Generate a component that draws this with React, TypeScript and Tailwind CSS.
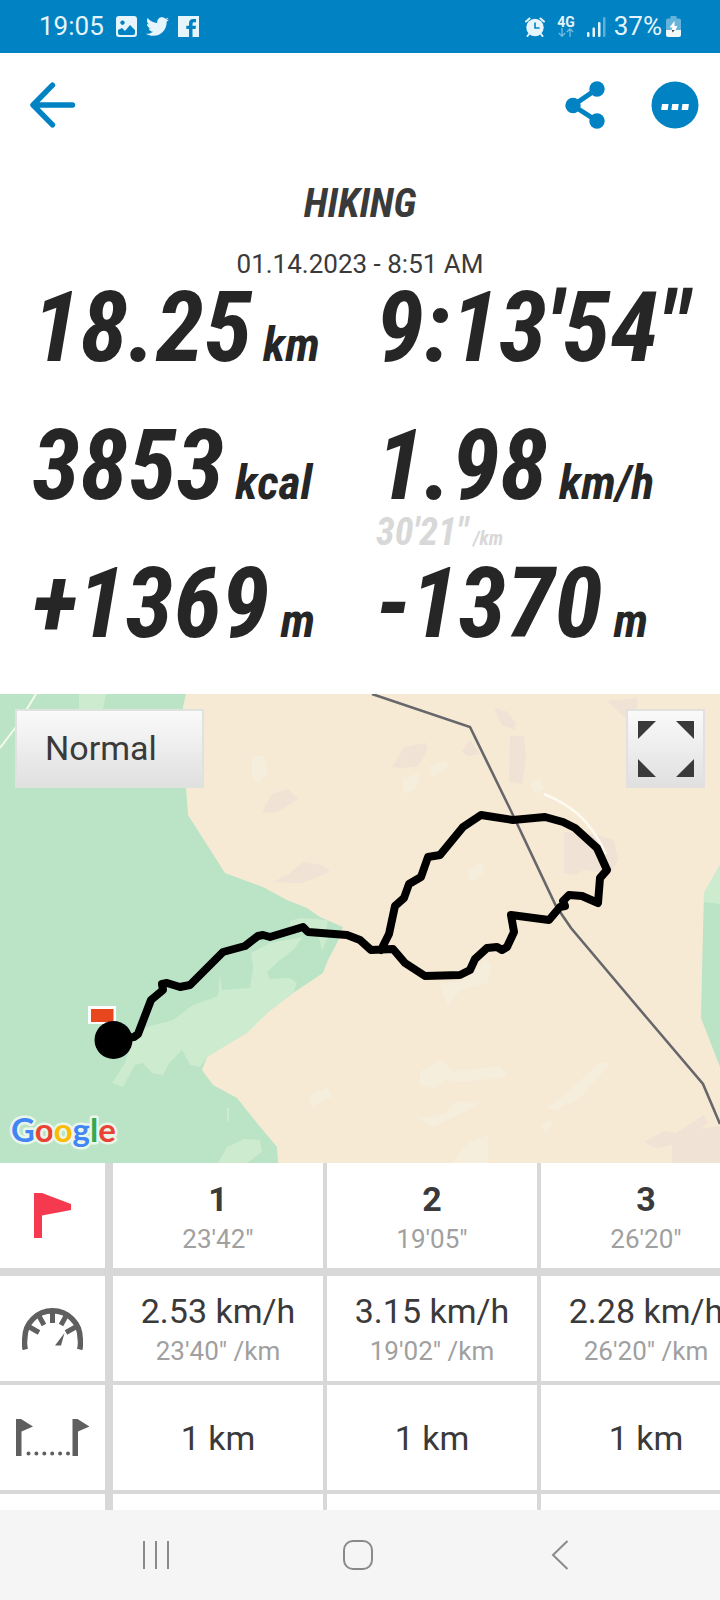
/**
 * Workout detail screen
 *
 * Summary figures, route map and the per-kilometre lap table.
 */

import { FaTwitter } from 'react-icons/fa'

// Types
interface Stat {
  value: string
  unit?: string
  pace?: string
}

interface Lap {
  index: number
  time: string
  speed: string
  pace: string
  distance: string
}

const stats: Stat[] = [
  { value: '18.25', unit: 'km' },
  { value: '9:13\'54"' },
  { value: '3853', unit: 'kcal' },
  { value: '1.98', unit: 'km/h', pace: '30\'21"' },
  { value: '+1369', unit: 'm' },
  { value: '-1370', unit: 'm' },
]

const laps: Lap[] = [
  { index: 1, time: '23\'42"', speed: '2.53 km/h', pace: '23\'40" /km', distance: '1 km' },
  { index: 2, time: '19\'05"', speed: '3.15 km/h', pace: '19\'02" /km', distance: '1 km' },
  { index: 3, time: '26\'20"', speed: '2.28 km/h', pace: '26\'20" /km', distance: '1 km' },
]

// Icons
const PictureIcon = () => (
  <svg width="21" height="21" viewBox="0 0 21 21">
    <path fillRule="evenodd" fill="currentColor" d="M3 0h15a3 3 0 0 1 3 3v15a3 3 0 0 1-3 3H3a3 3 0 0 1-3-3V3a3 3 0 0 1 3-3ZM2 14v3a2 2 0 0 0 2 2h13a2 2 0 0 0 2-2v-3l-5-5-5 6-3-3ZM6.500 4.500a2.200 2.200 0 1 0 .01 0Z" />
  </svg>
)

const FacebookIcon = () => (
  <svg width="21" height="21" viewBox="0 0 21 21">
    <path fill="currentColor" d="M0 0h21v21h-6.500v-8h3l.5-3.200h-3.500V8c0-1.200.5-1.800 1.800-1.800H18V3.100h-2.800c-2.900 0-4.200 1.700-4.200 4.400v2.300H8.300V13H11v8H0Z" />
  </svg>
)

const AlarmIcon = () => (
  <svg width="20" height="20" viewBox="0 0 20 20" fill="none" stroke="currentColor" strokeLinecap="round">
    <circle cx="10" cy="10.500" r="8.700" fill="currentColor" stroke="none" />
    <path strokeWidth="2" d="M1 4.500 4.500 1.500M19 4.500 15.500 1.500M4 17l-1.500 2M16 17l1.500 2" />
    <path stroke="#0082c3" strokeWidth="1.600" d="M10 6v5h4" />
  </svg>
)

const DataArrowsIcon = () => (
  <svg width="16" height="9" viewBox="0 0 16 9" fill="none" stroke="currentColor" strokeWidth="1.300">
    <path d="M4 0v8M.8 5 4 8.200 7.200 5M12 9V1M8.800 4 12 .8 15.200 4" />
  </svg>
)

const SignalIcon = () => (
  <svg width="19" height="20" viewBox="0 0 19 20" fill="currentColor">
    <rect x="0" y="15" width="2.500" height="5" rx="1" />
    <rect x="5.500" y="10.500" width="2.500" height="9.500" rx="1" />
    <rect x="11" y="5" width="2.500" height="15" rx="1" />
    <rect x="16" y="0" width="2.500" height="20" rx="1" opacity=".4" />
  </svg>
)

const BatteryIcon = () => (
  <svg width="15" height="21" viewBox="0 0 15 21">
    <path fill="#fff" opacity=".4" d="M4.500 0h6v2.500H13a2 2 0 0 1 2 2V14H0V4.500a2 2 0 0 1 2-2h2.500Z" />
    <path fill="#f0f8fc" d="M0 14h15v5a2 2 0 0 1-2 2H2a2 2 0 0 1-2-2Z" />
    <path fill="#fff" d="m8.500 5-5 6.500h3L5.500 14h4l2-4h-3Z" />
    <path fill="#3f4a50" d="M5.800 14h3l-2.300 2.500Z" />
  </svg>
)

const BackArrowIcon = () => (
  <svg width="46" height="46" viewBox="0 0 46 46" fill="none" stroke="currentColor" strokeWidth="5.400" strokeLinecap="round" strokeLinejoin="round">
    <path d="M22.500 3.200 3 23l19.500 19.800M4 23h38.500" />
  </svg>
)

const ShareIcon = () => (
  <svg width="40" height="48" viewBox="0 0 40 48" fill="currentColor">
    <path fill="none" stroke="currentColor" strokeWidth="5" d="M32 8 8 24.500 32 40" />
    <circle cx="8" cy="24.500" r="7.700" />
    <circle cx="32" cy="8" r="7.700" />
    <circle cx="32" cy="40" r="7.700" />
  </svg>
)

const MoreIcon = () => (
  <svg width="48" height="48" viewBox="0 0 48 48">
    <circle cx="24" cy="24" r="23.500" fill="currentColor" />
    <path fill="#fff" d="M11 23h6.500l-.8 6h-6.500ZM21.200 23h6.500l-.8 6h-6.500ZM31.400 23h6.500l-.8 6h-6.500Z" />
  </svg>
)

const ExpandIcon = () => (
  <svg width="56" height="56" viewBox="0 0 56 56" fill="#3a3a3a">
    <path d="M0 0h18L0 18ZM56 0H38l18 18ZM0 56V38l18 18ZM56 56V38L38 56Z" />
  </svg>
)

const FlagIcon = () => (
  <svg width="37" height="45" viewBox="0 0 37 45" fill="#f5394f">
    <path d="M0 0h8l29 11v6L8 22.500V45H0Z" />
  </svg>
)

const SpeedIcon = () => (
  <svg width="61" height="42" viewBox="0 0 61 42" fill="none" stroke="#5f5f5f">
    <path strokeWidth="5.500" d="M3.300 41.500A27.500 27.500 0 0 1 2.800 30.500A27.700 27.700 0 0 1 58.200 30.500A27.500 27.500 0 0 1 57.700 41.500" />
    <path strokeWidth="5" d="M30.500 3v12M6.500 18.500l10.500 6M54.500 18.500 44 24.500M17 8l5 9M44 8l-5 9" />
    <path fill="#5f5f5f" stroke="none" d="M42.500 25 39 37.500h-6Z" />
  </svg>
)

const DistanceIcon = () => (
  <svg width="73" height="37" viewBox="0 0 73 37" fill="#5f5f5f">
    <path d="M0 0h5l12 7.500-11.500 5V37H0ZM56.500 0h5l12 7.500-11.500 5V37h-5.500Z" />
    <path fill="none" stroke="#5f5f5f" strokeWidth="4" strokeLinecap="round" strokeDasharray="0 7.900" d="M12.500 34.500H53" />
  </svg>
)

const StatusBar = () => (
  <div className="flex h-[53px] items-center bg-[#0082c3] px-[39px] text-[26px] text-[#e6f4fb]">
    <span>19:05</span>
    <div className="ml-3 flex items-center gap-[9px]">
      <PictureIcon />
      <FaTwitter size={23} />
      <FacebookIcon />
    </div>
    <div className="ml-auto flex items-center">
      <AlarmIcon />
      <div className="mx-3 flex flex-col items-center">
        <span className="text-[14px] leading-3 font-bold">4G</span>
        <span className="opacity-50">
          <DataArrowsIcon />
        </span>
      </div>
      <SignalIcon />
      <span className="mr-1 ml-2">37%</span>
      <BatteryIcon />
    </div>
  </div>
)

const Header = () => (
  <header className="flex h-[103px] items-center justify-between pr-[21px] pl-[30px] text-[#0082c3]">
    <button type="button" aria-label="Back">
      <BackArrowIcon />
    </button>
    <div className="flex items-center gap-[46px]">
      <button type="button" aria-label="Share">
        <ShareIcon />
      </button>
      <button type="button" aria-label="More">
        <MoreIcon />
      </button>
    </div>
  </header>
)

const Summary = () => (
  <section className="pt-6">
    <h1 className="text-center font-['Roboto_Condensed','Liberation_Sans_Narrow',Roboto,sans-serif] text-[40px] leading-[48px] font-bold text-[#3a3a3a] italic">
      HIKING
    </h1>
    <p className="mt-5 text-center text-[26px] leading-8">01.14.2023 - 8:51 AM</p>
    <div className="grid auto-rows-[138px] grid-cols-2 pl-8 font-['Roboto_Condensed','Liberation_Sans_Narrow',Roboto,sans-serif] font-bold whitespace-nowrap text-[#262626] italic">
      {stats.map((stat) => (
        <div key={stat.value}>
          <p className="text-[98px] leading-[96px]">
            {stat.value}
            {stat.unit && <span className="text-[48px] leading-none"> {stat.unit}</span>}
          </p>
          {stat.pace && (
            <p className="text-[38px] leading-9 text-[#d8d8d8]">
              {stat.pace}
              <span className="text-[20px] leading-none"> /km</span>
            </p>
          )}
        </div>
      ))}
    </div>
  </section>
)

const RouteMap = () => (
  <section className="relative">
    <svg viewBox="0 0 720 469" className="block h-auto w-full bg-[#f7ead5]">
      {/* Terrain */}
      <g fill="#eee0d5" opacity=".8">
        <path d="m262 118 10-18 16-5 10 10-12 8-12 6ZM273 188l16-8 14-12 18 3 9 6-16 8-14 4ZM392 73l12-20 22-4 2 5-10 18-16 2ZM462 58l8-12 10 14-12 2ZM510 42h14l2 24-4 24-13-2ZM494 14l14 4 8 12-2 6-12-5ZM607 7l30-3v20h-12ZM564 138l30 2 20 6 4 20-8 14-26-4-8 5-12-2ZM644 448l20-11 12 2 16-10 12-8 4 8-8 6 20-3v37h-48v-18l-16 3Z" />
      </g>
      <g fill="#f5eedc">
        <path d="M252 62h12l4 16-10 12-6-10ZM402 86l18-8-4 16-12 6ZM430 72l14-6 6 6-18 12ZM530 90l10-6 4 10-8 6ZM468 176l14-8 2 10-14 10ZM440 290l28-4 16-20 8 4-4 18-28 8-12 16ZM420 378l22-12 12 12 46-6 8 10-44 6-20-2-8 8-16-2ZM420 425l26-6 10-12 22 2-16 10-30 14ZM546 414l18-12 36-34 10 2-30 34-24 12ZM452 469l16-20 20-8v28ZM308 402l20-8 4 8-20 12ZM540 430l14-4-8 14Z" />
      </g>
      <path fill="#bbe3c6" d="M0 0h186l-3 13 3 80 2 28 37 58 38 14 24 13 20 8 13 9 23 10-6 16-9 17-5 13-30 20-26 20-20 19-40 25-5 13 11 15 24 13 20 25 20 24 1 16H0Z" />
      <path fill="#cdebcf" d="m147 333 26-7 20-15 20-7 5-2 2-22 2 16 28-2 3-20-2-15 19-10 33-6-10 13-13 10-13 12 3 7 20-1 7 5-4 10-26 20-20 20-40 24-7 10-10-2-8-15-12 12-7 13-11-2-9-10-8 2-12 22-11-4 13-20 8-23ZM218 469l9-16 17-8 16 1 2 12-15 11ZM79 0h27l-4 20H79ZM290 227l10-3 28 2-2 10-36-3ZM318 240l10 4-6 12ZM227 414l2 0 0 12-2 2Z" />
      <path fill="#bbe3c6" d="m720 171-16 28-1 37-2 88 19 49Z" />
      <path fill="#cdebcf" d="m720 171-16 28v9l16 2Z" />
      <path fill="none" stroke="#f4fbe9" strokeWidth="2" d="M36 0 16 33 0 54" />
      <path fill="none" stroke="#fffaf0" strokeWidth="2.500" d="M544 100c24 10 44 22 62 60" />
      <path fill="none" stroke="#67676b" strokeWidth="2.600" d="M372 0 470 33 512 119 556 212 571 234 647 324 703 390 720 430" />

      {/* Start flag */}
      <path fill="#fff" d="M88 312h28v18H88Z" />
      <path fill="#e8471d" d="M91 315h22.500v13H91Z" />

      {/* Recorded track */}
      <path
        fill="none"
        stroke="#000"
        strokeWidth="8"
        strokeLinejoin="round"
        strokeLinecap="round"
        d="M113 346 134 343 138 340 151 306 163 296 162 290 167 289 180 293 190 291 223 258 245 252 258 242 263 241 270 243 303 233 308 238 347 241 360 246 371 256 393 255 405 269 425 282 460 281 470 276 475 265 487 254 497 253 502 256 507 253 514 238 511 221 549 226 560 213 565 212 563 207 569 201 582 202 598 209 600 184 607 176 597 154 575 134 563 128 545 123 513 126 481 121 463 133 440 161 428 163 421 183 409 190 404 204 395 212 389 240 381 256"
      />
      <circle cx="113.500" cy="346" r="19" />

      <text x="11" y="448" fontSize="33" fontWeight="700" stroke="#e9f6ea" strokeWidth="5" strokeLinejoin="round" paintOrder="stroke" className="font-[Lato,sans-serif]">
        <tspan fill="#4285f4">G</tspan>
        <tspan fill="#ea4335">o</tspan>
        <tspan fill="#fbbc05">o</tspan>
        <tspan fill="#4285f4">g</tspan>
        <tspan fill="#34a853">l</tspan>
        <tspan fill="#ea4335">e</tspan>
      </text>
    </svg>

    {/* Map controls */}
    <div className="absolute inset-x-[15px] top-[15px] flex items-start justify-between">
      <select
        aria-label="Map type"
        className="h-[79px] w-[189px] appearance-none border-2 border-[#dfe3dd] bg-linear-to-b from-[#fafafa] to-[#e0e0e0] pl-7 text-[34px] text-[#3a3a3a]"
      >
        <option>Normal</option>
      </select>
      <button
        type="button"
        aria-label="Full screen"
        className="flex h-[79px] w-[79px] items-center justify-center border-2 border-[#e3e1df] bg-linear-to-b from-[#fafafa] to-[#e0e0e0]"
      >
        <ExpandIcon />
      </button>
    </div>
  </section>
)

const rowHead = 'w-[113px] border-r-8 border-[#d8d8d8] p-0'
const cell = 'w-[214px] border-r-4 border-[#d8d8d8] p-0 text-center'

const LapTable = () => (
  <section className="overflow-hidden">
    <table className="w-[755px] table-fixed border-separate border-spacing-0 leading-10 whitespace-nowrap">
      <thead>
        <tr className="h-[113px]">
          <th scope="col" aria-label="Lap" className={`${rowHead} border-b-8`}>
            <div className="flex justify-center">
              <FlagIcon />
            </div>
          </th>
          {laps.map((lap) => (
            <th key={lap.index} scope="col" className={`${cell} border-b-8 font-normal`}>
              <div className="pt-1.5 text-[34px] font-bold">{lap.index}</div>
              <div className="text-[26px] text-[#a0a0a0]">{lap.time}</div>
            </th>
          ))}
        </tr>
      </thead>
      <tbody>
        <tr className="h-[109px]">
          <th scope="row" aria-label="Speed" className={`${rowHead} border-b-4`}>
            <div className="flex justify-center">
              <SpeedIcon />
            </div>
          </th>
          {laps.map((lap) => (
            <td key={lap.index} className={`${cell} border-b-4`}>
              <div className="pt-1 text-[34px]">{lap.speed}</div>
              <div className="text-[26px] text-[#a0a0a0]">{lap.pace}</div>
            </td>
          ))}
        </tr>
        <tr className="h-[109px]">
          <th scope="row" aria-label="Distance" className={`${rowHead} border-b-4`}>
            <div className="flex justify-center">
              <DistanceIcon />
            </div>
          </th>
          {laps.map((lap) => (
            <td key={lap.index} className={`${cell} border-b-4 text-[34px]`}>
              {lap.distance}
            </td>
          ))}
        </tr>
        <tr className="h-4">
          <td className={rowHead} />
          {laps.map((lap) => (
            <td key={lap.index} className={cell} />
          ))}
        </tr>
      </tbody>
    </table>
  </section>
)

const NavBar = () => (
  <nav className="flex h-[90px] items-center justify-around bg-[#f5f5f5] pr-[60px] pl-14 text-[#8a8a8a]">
    <button type="button" aria-label="Recent apps">
      <svg width="28" height="28" viewBox="0 0 28 28" fill="none" stroke="currentColor" strokeWidth="2">
        <path d="M2 0v28M14 0v28M26 0v28" />
      </svg>
    </button>
    <button type="button" aria-label="Home">
      <svg width="30" height="30" viewBox="0 0 30 30" fill="none" stroke="currentColor" strokeWidth="2">
        <rect x="1" y="1" width="28" height="28" rx="9" />
      </svg>
    </button>
    <button type="button" aria-label="Back">
      <svg width="28" height="30" viewBox="0 0 28 30" fill="none" stroke="currentColor" strokeWidth="2">
        <path d="M21.500 1 7 15l14.500 14" />
      </svg>
    </button>
  </nav>
)

export default function App() {
  return (
    <main className="min-h-screen bg-white font-[Roboto,sans-serif] text-[#3a3a3a]">
      <StatusBar />
      <Header />
      <Summary />
      <RouteMap />
      <LapTable />
      <NavBar />
    </main>
  )
}
